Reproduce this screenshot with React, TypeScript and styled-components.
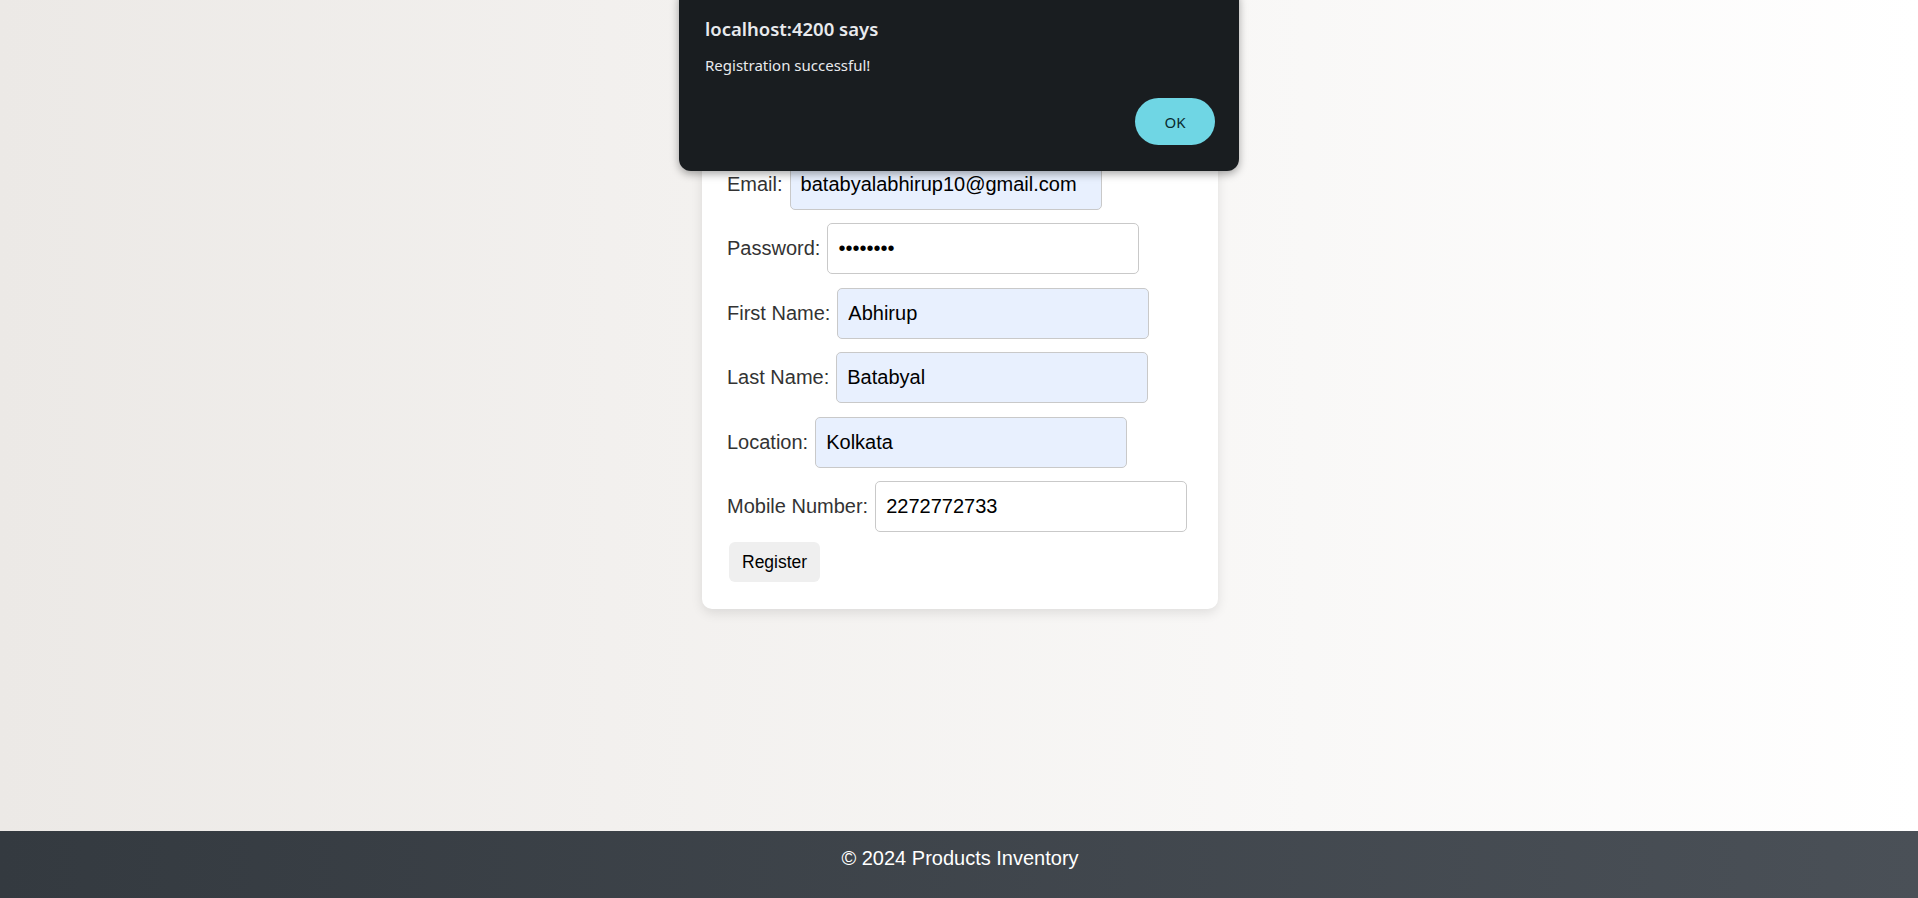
import styled, { createGlobalStyle } from 'styled-components';

const GlobalStyle = createGlobalStyle`
  html, body {
    margin: 0;
    padding: 0;
    height: 100%;
  }
  body {
    font-family: "Liberation Sans", Arial, sans-serif;
    background: linear-gradient(to right, #ece9e6, #ffffff);
  }
  #root {
    min-height: 100vh;
  }
`;

const Root = styled.div`
  position: relative;
  min-height: 100vh;
  display: flex;
  flex-direction: column;
`;

const Main = styled.main`
  flex: 1;
  display: flex;
  justify-content: center;
  align-items: flex-start;
  padding-top: 40px;
`;

const Card = styled.section`
  width: 516px;
  box-sizing: border-box;
  margin-left: 2px;
  padding: 25px 25px 27px;
  background: #ffffff;
  border-radius: 10px;
  box-shadow: 0 4px 12px rgba(0, 0, 0, 0.1);
`;

const Heading = styled.h2`
  margin: 0 0 58.5px;
  font-size: 30px;
  line-height: 35px;
  color: #333;
  text-align: center;
`;

const Form = styled.form`
  display: flex;
  flex-direction: column;
  align-items: flex-start;
  gap: 13.5px;
`;

const Row = styled.div`
  display: flex;
  align-items: center;
`;

const Label = styled.label`
  margin-right: 7px;
  font-size: 20px;
  color: #333;
  white-space: nowrap;
`;

const Input = styled.input<{ $autofill?: boolean }>`
  width: 312px;
  height: 51px;
  box-sizing: border-box;
  padding: 0 10px;
  border: 1px solid #c9c9c9;
  border-radius: 5px;
  background: ${(p) => (p.$autofill ? '#e8f0fe' : '#ffffff')};
  font-family: "Liberation Sans", Arial, sans-serif;
  font-size: 20px;
  color: #000;
  outline: none;
`;

const SubmitButton = styled.button`
  margin: -3.5px 0 0 2px;
  height: 40px;
  padding: 0 13px;
  border: none;
  border-radius: 6px;
  background: #efefef;
  font-family: "Liberation Sans", Arial, sans-serif;
  font-size: 17.5px;
  color: #000;
`;

const Footer = styled.footer`
  height: 67px;
  box-sizing: border-box;
  padding-top: 16px;
  padding-left: 2px;
  background: linear-gradient(to right, #343a40, #4a5057);
  color: #ffffff;
  text-align: center;
  font-size: 20px;
`;

const Dialog = styled.div`
  position: absolute;
  top: -12px;
  left: 679px;
  width: 560px;
  height: 183px;
  box-sizing: border-box;
  padding: 29px 24px 0 26px;
  background: #191d20;
  border-radius: 12px;
  box-shadow: 0 3px 8px rgba(0, 0, 0, 0.35);
  font-family: "Noto Sans", "Open Sans", sans-serif;
  color: #e8eaed;
  display: flex;
  flex-direction: column;
`;

const DialogTitle = styled.div`
  font-size: 18.5px;
  font-weight: 600;
  line-height: 24px;
`;

const DialogMessage = styled.div`
  margin-top: 14px;
  font-size: 15px;
  line-height: 20px;
`;

const DialogActions = styled.div`
  display: flex;
  justify-content: flex-end;
  margin-top: 23px;
`;

const OkButton = styled.button`
  width: 80px;
  height: 47px;
  border: none;
  border-radius: 24px;
  background: #6fd6e4;
  color: #0a2a2f;
  font-family: "Noto Sans", "Open Sans", sans-serif;
  font-size: 15px;
`;

const fields = [
  { label: 'Email:', type: 'email', value: 'batabyalabhirup10@gmail.com', autofill: true },
  { label: 'Password:', type: 'password', value: '12345678', autofill: false },
  { label: 'First Name:', type: 'text', value: 'Abhirup', autofill: true },
  { label: 'Last Name:', type: 'text', value: 'Batabyal', autofill: true },
  { label: 'Location:', type: 'text', value: 'Kolkata', autofill: true },
  { label: 'Mobile Number:', type: 'text', value: '2272772733', autofill: false },
];

export default function App() {
  return (
    <Root>
      <GlobalStyle />
      <Main>
        <Card>
          <Heading>Register</Heading>
          <Form onSubmit={(e) => e.preventDefault()}>
            {fields.map((f) => (
              <Row key={f.label}>
                <Label>{f.label}</Label>
                <Input
                  type={f.type}
                  defaultValue={f.value}
                  $autofill={f.autofill}
                />
              </Row>
            ))}
            <SubmitButton type="submit">Register</SubmitButton>
          </Form>
        </Card>
      </Main>
      <Footer>© 2024 Products Inventory</Footer>
      <Dialog>
        <DialogTitle>localhost:4200 says</DialogTitle>
        <DialogMessage>Registration successful!</DialogMessage>
        <DialogActions>
          <OkButton>OK</OkButton>
        </DialogActions>
      </Dialog>
    </Root>
  );
}
